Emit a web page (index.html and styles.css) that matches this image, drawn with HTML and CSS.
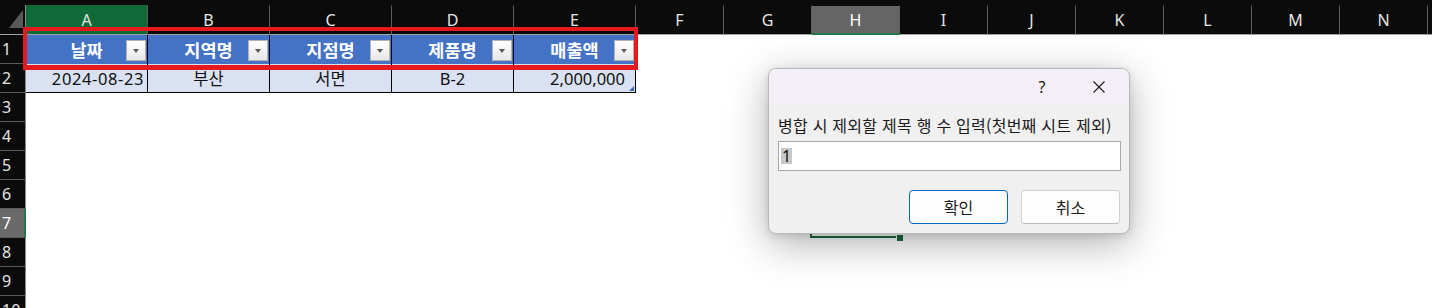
FILE: index.html
```html
<!DOCTYPE html>
<html lang="ko">
<head>
<meta charset="utf-8">
<title>Excel</title>
<link rel="stylesheet" href="styles.css">
</head>
<body>
<div class="app">
  <div class="topstrip"></div>
  <div class="grid">
    <div class="corner"><svg width="25" height="29" viewBox="0 0 25 29"><polygon points="23,5 23,23 9,23" fill="#5a5a5a"/></svg></div>
    <div class="ch ch-a">A</div>
    <div class="ch">B</div>
    <div class="ch">C</div>
    <div class="ch">D</div>
    <div class="ch">E</div>
    <div class="ch">F</div>
    <div class="ch">G</div>
    <div class="ch ch-h">H</div>
    <div class="ch">I</div>
    <div class="ch">J</div>
    <div class="ch">K</div>
    <div class="ch">L</div>
    <div class="ch">M</div>
    <div class="ch">N</div>
    <div class="ch ch-rest"></div>

    <div class="rh">1</div>
    <div class="c th">날짜<span class="dd"></span></div>
    <div class="c th">지역명<span class="dd"></span></div>
    <div class="c th">지점명<span class="dd"></span></div>
    <div class="c th">제품명<span class="dd"></span></div>
    <div class="c th">매출액<span class="dd"></span></div>
    <div class="c blank from-f"></div>

    <div class="rh">2</div>
    <div class="c td num num-a">2024-08-23</div>
    <div class="c td ctr">부산</div>
    <div class="c td ctr">서면</div>
    <div class="c td ctr">B-2</div>
    <div class="c td num num-e">2,000,000<span class="resize"></span></div>
    <div class="c blank from-f"></div>

    <div class="rh">3</div><div class="c blank full"></div>
    <div class="rh">4</div><div class="c blank full"></div>
    <div class="rh">5</div><div class="c blank full"></div>
    <div class="rh">6</div><div class="c blank full"></div>
    <div class="rh rh-sel">7</div>
    <div class="c blank to-g"></div>
    <div class="c sel"><span class="handle"></span></div>
    <div class="c blank from-i"></div>
    <div class="rh">8</div><div class="c blank full"></div>
    <div class="rh">9</div><div class="c blank full"></div>
    <div class="rh">10</div><div class="c blank full"></div>
  </div>

  <div class="annot"></div>

  <div class="dialog">
    <div class="titlebar">
      <span class="tb-btn">?</span>
      <span class="tb-btn"><svg width="12" height="12" viewBox="0 0 12 12"><path d="M0.5 0.5 L11.5 11.5 M11.5 0.5 L0.5 11.5" stroke="#1b1b1b" stroke-width="1.1" fill="none"/></svg></span>
    </div>
    <div class="dlg-body">
      <div class="prompt">병합 시 제외할 제목 행 수 입력(첫번째 시트 제외)</div>
      <div class="input"><span class="picked">1</span></div>
      <div class="actions">
        <button class="btn primary">확인</button>
        <button class="btn">취소</button>
      </div>
    </div>
  </div>
</div>
</body>
</html>
```

FILE: styles.css
```css
*, *::before, *::after { box-sizing: border-box; margin: 0; padding: 0; }
html, body { width: 1432px; height: 308px; overflow: hidden; background: #ffffff; }
body { font-family: "Noto Sans", "Noto Sans CJK KR", sans-serif; }

.app { position: relative; width: 1432px; height: 308px; overflow: hidden; }
.topstrip { height: 5px; background: #0b0b0b; }

.grid {
  display: grid;
  grid-template-columns: 26px repeat(5, 122px) repeat(9, 88px) 1fr;
  grid-template-rows: 30px repeat(10, 29px);
}

.corner {
  background: #0b0b0b;
  border-right: 1px solid #8a8a8a;
  border-bottom: 1px solid #a4a4a4;
}
.corner svg { display: block; }

.ch {
  background: #0b0b0b;
  color: #e4e4e4;
  font-size: 16px;
  display: flex;
  align-items: center;
  justify-content: center;
  border-top: 1px solid #0b0b0b;
  border-right: 1px solid #5c5c5c;
  border-bottom: 1px solid #a4a4a4;
}
.ch-a { background: #0e6b37; border-top-color: #0e6b37; }
.ch-h { background: #656565; color: #ffffff; border-top-color: #0b0b0b; border-bottom: 2px solid #1f7a48; }
.ch-rest { border-right: none; }

.rh {
  background: #0b0b0b;
  color: #e4e4e4;
  font-size: 16px;
  display: flex;
  align-items: center;
  padding-left: 2px;
  border-right: 1px solid #8a8a8a;
  border-bottom: 1px solid #5c5c5c;
}
.rh-sel { background: #6a6a6a; color: #ffffff; border-right: 2px solid #1f7a48; }

.blank { background: #ffffff; }
.from-f { grid-column: 7 / -1; }
.full { grid-column: 2 / -1; }
.to-g { grid-column: 2 / 9; }
.from-i { grid-column: 10 / -1; }

.th {
  position: relative;
  background: #4472c4;
  color: #ffffff;
  font-family: "Noto Sans CJK KR", sans-serif;
  font-weight: 700;
  font-size: 17.5px;
  display: flex;
  align-items: center;
  justify-content: center;
  border-right: 1px solid #000000;
}
.dd {
  position: absolute;
  right: 1px;
  top: 5px;
  width: 20px;
  height: 21px;
  border: 1px solid #b3b3b3;
  background: linear-gradient(#fefefe, #e8e8e8);
}
.dd::after {
  content: "";
  position: absolute;
  left: 6px;
  top: 8px;
  border-left: 3.5px solid transparent;
  border-right: 3.5px solid transparent;
  border-top: 4px solid #5a5a5a;
}

.td {
  position: relative;
  background: #d9e1f2;
  color: #111111;
  font-size: 16.5px;
  display: flex;
  align-items: center;
  border-right: 1px solid #000000;
  border-bottom: 1px solid #000000;
}
.ctr { justify-content: center; }
.num { justify-content: flex-end; }
.num-a { padding-right: 3px; letter-spacing: 0.6px; }
.num-e { padding-right: 10px; }
.resize {
  position: absolute;
  right: 1px;
  bottom: 1px;
  width: 0;
  height: 0;
  border-left: 5px solid transparent;
  border-bottom: 5px solid #3d64b5;
}

.sel { position: relative; z-index: 1; background: #ffffff; }
.sel::before {
  content: "";
  position: absolute;
  left: -2px;
  top: -2px;
  width: 90px;
  height: 31px;
  border: 2px solid #1d6a3f;
}
.handle {
  position: absolute;
  right: -3px;
  bottom: -3px;
  width: 6px;
  height: 6px;
  background: #1d6a3f;
  outline: 1px solid #ffffff;
}

.annot {
  position: absolute;
  left: 23px;
  top: 27px;
  width: 615px;
  height: 43px;
  border: 4px solid #e41a1f;
  border-bottom-width: 5px;
}

.dialog {
  position: absolute;
  z-index: 2;
  left: 768px;
  top: 68px;
  width: 362px;
  height: 166px;
  border: 1px solid #b8b8b8;
  border-radius: 8px;
  overflow: hidden;
  background: #f0f0f0;
  box-shadow: 0 10px 40px rgba(0, 0, 0, 0.30), 0 2px 8px rgba(0, 0, 0, 0.12);
  font-family: "Noto Sans CJK KR", sans-serif;
  color: #1b1b1b;
}
.titlebar {
  height: 36px;
  background: #f4eff7;
  display: flex;
  justify-content: flex-end;
  align-items: center;
  gap: 11px;
  padding-right: 7px;
}
.tb-btn {
  width: 46px;
  height: 36px;
  display: flex;
  align-items: center;
  justify-content: center;
  font-family: "Noto Sans", sans-serif;
  font-size: 16px;
  color: #1b1b1b;
}
.tb-btn svg { display: block; }

.dlg-body {
  display: flex;
  flex-direction: column;
  padding: 9px 8px 9px 9px;
}
.prompt {
  font-size: 16px;
  letter-spacing: 0.25px;
  line-height: 22px;
  height: 22px;
  white-space: nowrap;
  color: #1b1b1b;
}
.input {
  margin-top: 5px;
  height: 30px;
  background: #ffffff;
  border: 1px solid #a9a9a9;
  display: flex;
  align-items: center;
  padding-left: 2px;
}
.picked {
  display: inline-block;
  height: 16px;
  line-height: 16px;
  padding: 0 1px;
  background: #c8c8c8;
  font-family: "Noto Sans", sans-serif;
  font-size: 16px;
  color: #111111;
}
.actions {
  margin-top: 19px;
  display: flex;
  justify-content: flex-end;
  gap: 13px;
  padding-right: 1px;
}
.btn {
  width: 99px;
  height: 34px;
  border: 1px solid #d0d0d0;
  border-bottom-color: #bcbcbc;
  border-radius: 4px;
  background: #fdfdfd;
  font-family: "Noto Sans CJK KR", sans-serif;
  font-size: 16px;
  color: #1b1b1b;
}
.btn.primary { border: 1.5px solid #0067c0; }
```
